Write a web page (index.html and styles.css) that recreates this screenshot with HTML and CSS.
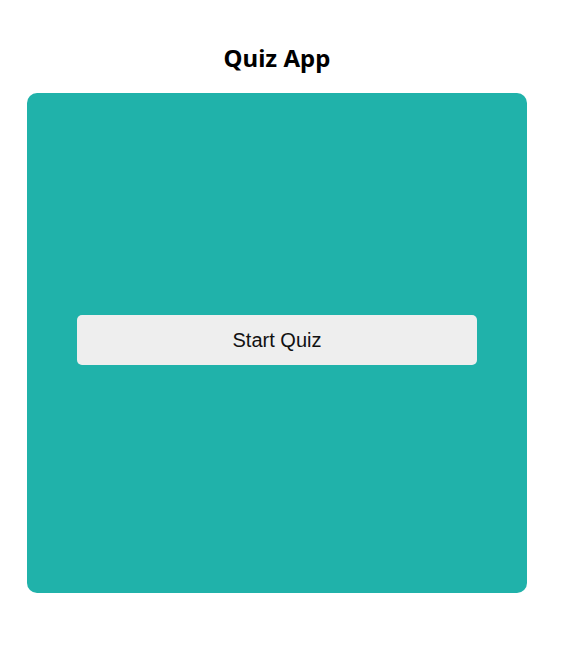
FILE: index.html
```html
<!DOCTYPE html>
<html lang="en">
<head>
<meta charset="utf-8">
<title>Quiz App</title>
<link rel="stylesheet" href="styles.css">
</head>
<body>
<div class="app">
  <h1 class="title">Quiz App</h1>
  <div class="card">
    <button class="start-btn" type="button">Start Quiz</button>
  </div>
</div>
</body>
</html>
```

FILE: styles.css
```css
html, body {
  margin: 0;
  padding: 0;
  background: #ffffff;
}
.app {
  width: 500px;
  padding: 0 27px;
}
.title {
  margin: 42px 0 19px;
  font-family: "Noto Sans", "Open Sans", sans-serif;
  font-size: 24px;
  line-height: 32px;
  font-weight: 700;
  text-align: center;
  color: #000;
}
.card {
  width: 500px;
  height: 500px;
  background: #20b2aa;
  border-radius: 10px;
  display: flex;
  align-items: center;
  justify-content: center;
}
.start-btn {
  width: 400px;
  height: 50px;
  margin-bottom: 6px;
  border: none;
  border-radius: 5px;
  background: #eeeeee;
  color: #111;
  font-family: "Liberation Sans", Arial, sans-serif;
  font-size: 20px;
  padding: 0;
  cursor: pointer;
}
```
